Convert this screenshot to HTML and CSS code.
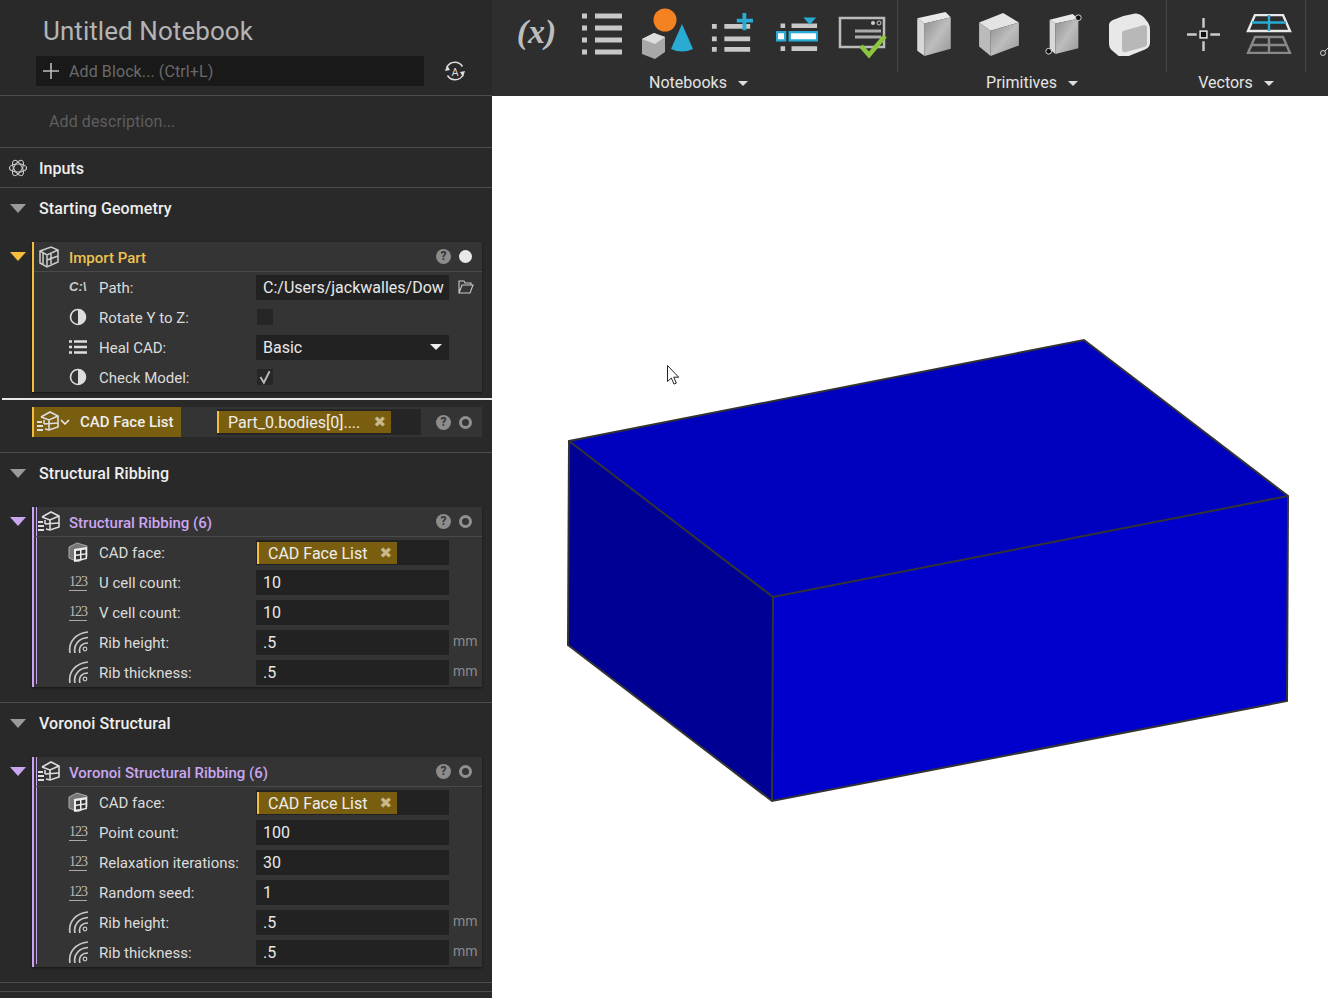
FILE: index.html
```html
<!DOCTYPE html>
<html lang="en">
<head>
    <meta charset="UTF-8">
    <title>Untitled Notebook</title>
    <link rel="stylesheet" href="styles.css">
</head>
<body>
    <svg class="sprites" width="0" height="0">
        <symbol id="i-bool" viewBox="0 0 18 18">
            <circle cx="9" cy="9" r="7.500" fill="none" stroke="#ddd" stroke-width="1.600"/>
            <path d="M9 1.500a7.500 7.500 0 0 1 0 15z" fill="#ddd"/>
        </symbol>
        <symbol id="i-list" viewBox="0 0 18 14">
            <path d="M0 1.500h3M5 1.500h13M0 7h3M5 7h13M0 12.500h3M5 12.500h13" stroke="#ddd" stroke-width="2.500" fill="none"/>
        </symbol>
        <symbol id="i-rib" viewBox="0 0 22 22">
            <g fill="none" stroke="#c8c8c8" stroke-width="1.700">
                <path d="M2 22C0 11 8 2 20 1"/>
                <path d="M7 22C5 14 11 7 20 6.500"/>
                <path d="M12 22c-2-6 2-10 8-10"/>
            </g>
            <circle cx="17" cy="18" r="1.800" fill="none" stroke="#c8c8c8" stroke-width="1.200"/>
        </symbol>
        <symbol id="i-face" viewBox="0 0 20 20">
            <path d="M1 5l8-4 10 3v11l-9 5-9-4z" fill="#777" stroke="#aaa"/>
            <path d="M6 7l13-2v12l-13 3z" fill="#eee"/>
            <path d="M8 9l4-.6v3.600l-4 .5zM13.500 8.200l4-.6v3.600l-4 .6zM8 14l4-.6v3.600l-4 .6zM13.500 13.200l4-.6v3.400l-4 .7z" fill="#333"/>
        </symbol>
        <symbol id="i-ribbing" viewBox="0 0 22 22">
            <g fill="none" stroke="#ddd" stroke-width="1.600">
                <path d="M4 6l9-5 8 4v11l-9 3-4-1"/>
                <path d="M4 6l8 3 9-4M12 9v10M7 13l14-1M7 9v4"/>
            </g>
            <path d="M0 11h5M0 15h6M0 19h6" stroke="#ddd" stroke-width="2.200"/>
        </symbol>
        <symbol id="i-box" viewBox="0 0 22 22">
            <g fill="none" stroke="#ccc" stroke-width="1.500">
                <path d="M2 5l11-4 7 3v12l-11 5-7-4z"/>
                <path d="M2 5l7 4 11-5M9 9v12M5 7v11M13 7v11M9 14l11-4"/>
            </g>
        </symbol>
        <linearGradient id="g-silver" x1="0" x2="1" y1="0" y2="1">
            <stop offset="0" stop-color="#8e8e8e"/>
            <stop offset=".5" stop-color="#bdbdbd"/>
            <stop offset="1" stop-color="#989898"/>
        </linearGradient>
    </svg>

    <div class="app">
        <aside class="sidebar">
            <header class="nb-head">
                <div class="nb-title">Untitled Notebook</div>
                <div class="add-row">
                    <div class="add-block">
                        <svg class="plus" viewBox="0 0 16 16"><path d="M8 0v16M0 8h16" stroke="#bbb" stroke-width="1.600"/></svg>
                        <span>Add Block... (Ctrl+L)</span>
                    </div>
                    <svg class="auto-icon" viewBox="0 0 20 20">
                        <path d="M17.500 5.500A9 9 0 0 0 2 6M2.500 14.500a9 9 0 0 0 15.500-.5" fill="none" stroke="#ddd" stroke-width="1.500"/>
                        <path d="M0 10l2-6 3 5zM20 10l-2 6-3-5z" fill="#ddd"/>
                        <text x="10" y="14.500" text-anchor="middle" class="auto-glyph">A</text>
                    </svg>
                </div>
            </header>

            <div class="description">Add description...</div>

            <div class="inputs-row">
                <svg class="atom" viewBox="0 0 20 20">
                    <g fill="none" stroke="#ccc" stroke-width="1.200">
                        <ellipse cx="10" cy="10" rx="9.500" ry="4.500"/>
                        <ellipse cx="10" cy="10" rx="9.500" ry="4.500" transform="rotate(60 10 10)"/>
                        <ellipse cx="10" cy="10" rx="9.500" ry="4.500" transform="rotate(120 10 10)"/>
                    </g>
                </svg>
                <span>Inputs</span>
            </div>

            <section class="group group-first">
                <div class="group-head"><i class="caret"></i><span>Starting Geometry</span></div>
                <div class="card card-import">
                    <div class="card-head">
                        <i class="caret caret-yellow"></i>
                        <svg class="card-icon"><use href="#i-box"/></svg>
                        <span class="card-title">Import Part</span>
                        <span class="help">?</span>
                        <i class="dot dot-full"></i>
                    </div>
                    <div class="row">
                        <span class="row-icon path-glyph">C:\</span>
                        <label>Path:</label>
                        <div class="field">C:/Users/jackwalles/Dow</div>
                        <svg class="folder" viewBox="0 0 16 14"><path d="M1 13V1h5l1 2h6v2M1 13h11l3-8H4z" fill="none" stroke="#ccc" stroke-width="1.100"/></svg>
                    </div>
                    <div class="row">
                        <svg class="row-icon icon-bool"><use href="#i-bool"/></svg>
                        <label>Rotate Y to Z:</label>
                        <i class="check"></i>
                    </div>
                    <div class="row">
                        <svg class="row-icon icon-list"><use href="#i-list"/></svg>
                        <label>Heal CAD:</label>
                        <div class="field field-select">Basic<i class="select-caret"></i></div>
                    </div>
                    <div class="row">
                        <svg class="row-icon icon-bool"><use href="#i-bool"/></svg>
                        <label>Check Model:</label>
                        <i class="check"><svg viewBox="0 0 14 14"><path d="M3 7l3 5 5-10" fill="none" stroke="#b5b5b5" stroke-width="1.800"/></svg></i>
                    </div>
                </div>
            </section>

            <div class="white-rule"></div>

            <div class="output-row">
                <div class="output-tag">
                    <svg class="tag-icon"><use href="#i-ribbing"/></svg>
                    <svg class="tag-chev" viewBox="0 0 10 6"><path d="M1 1l4 4 4-4" fill="none" stroke="#eee" stroke-width="1.500"/></svg>
                    <span>CAD Face List</span>
                </div>
                <div class="output-field">
                    <div class="chip chip-long">Part_0.bodies[0]....<b class="chip-x">✖</b></div>
                </div>
                <span class="help">?</span>
                <i class="dot"></i>
            </div>

            <section class="group group-rib">
                <div class="group-head"><i class="caret"></i><span>Structural Ribbing</span></div>
                <div class="card card-purple">
                    <div class="card-head">
                        <i class="caret caret-purple"></i>
                        <svg class="card-icon"><use href="#i-ribbing"/></svg>
                        <span class="card-title">Structural Ribbing (6)</span>
                        <span class="help">?</span>
                        <i class="dot"></i>
                    </div>
                    <div class="row">
                        <svg class="row-icon"><use href="#i-face"/></svg>
                        <label>CAD face:</label>
                        <div class="field field-chip"><div class="chip">CAD Face List<b class="chip-x">✖</b></div></div>
                    </div>
                    <div class="row"><span class="row-icon num-icon">123</span><label>U cell count:</label><div class="field">10</div></div>
                    <div class="row"><span class="row-icon num-icon">123</span><label>V cell count:</label><div class="field">10</div></div>
                    <div class="row"><svg class="row-icon icon-rib"><use href="#i-rib"/></svg><label>Rib height:</label><div class="field">.5</div><span class="unit">mm</span></div>
                    <div class="row"><svg class="row-icon icon-rib"><use href="#i-rib"/></svg><label>Rib thickness:</label><div class="field">.5</div><span class="unit">mm</span></div>
                </div>
            </section>

            <section class="group group-rib">
                <div class="group-head"><i class="caret"></i><span>Voronoi Structural</span></div>
                <div class="card card-purple">
                    <div class="card-head">
                        <i class="caret caret-purple"></i>
                        <svg class="card-icon"><use href="#i-ribbing"/></svg>
                        <span class="card-title">Voronoi Structural Ribbing (6)</span>
                        <span class="help">?</span>
                        <i class="dot"></i>
                    </div>
                    <div class="row">
                        <svg class="row-icon"><use href="#i-face"/></svg>
                        <label>CAD face:</label>
                        <div class="field field-chip"><div class="chip">CAD Face List<b class="chip-x">✖</b></div></div>
                    </div>
                    <div class="row"><span class="row-icon num-icon">123</span><label>Point count:</label><div class="field">100</div></div>
                    <div class="row"><span class="row-icon num-icon">123</span><label>Relaxation iterations:</label><div class="field">30</div></div>
                    <div class="row"><span class="row-icon num-icon">123</span><label>Random seed:</label><div class="field">1</div></div>
                    <div class="row"><svg class="row-icon icon-rib"><use href="#i-rib"/></svg><label>Rib height:</label><div class="field">.5</div><span class="unit">mm</span></div>
                    <div class="row"><svg class="row-icon icon-rib"><use href="#i-rib"/></svg><label>Rib thickness:</label><div class="field">.5</div><span class="unit">mm</span></div>
                </div>
            </section>

            <div class="tail-rule"></div>
        </aside>

        <main class="main">
            <div class="toolbar">
                <div class="tool-group group-notebooks">
                    <div class="tools">
                        <div class="tool"><span class="fx">(x)</span></div>
                        <div class="tool">
                            <svg viewBox="0 0 42 42" class="tool-svg"><path d="M1 3h5M14 3h27M1 15h5M14 15h27M1 27h5M14 27h27M1 39h5M14 39h27" stroke="#c8c8c8" stroke-width="5" fill="none"/></svg>
                        </div>
                        <div class="tool">
                            <svg viewBox="0 0 52 52" class="tool-svg tool-shapes">
                                <circle cx="24" cy="12" r="11.500" fill="#f58220"/>
                                <path d="M41 16L30 41q11 5 22 0z" fill="#29abd4"/>
                                <path d="M1 31l12-6 11 4v15l-10 7-13-5z" fill="#a8a8a8"/>
                                <path d="M1 31l13 5 10-7-11-4z" fill="#ddd"/>
                            </svg>
                        </div>
                        <div class="tool">
                            <svg viewBox="0 0 44 44" class="tool-svg">
                                <path d="M1 14h5M14 14h27M1 27h5M14 27h27M1 38h5M14 38h27" stroke="#c8c8c8" stroke-width="5" fill="none"/>
                                <path d="M35 0v18M27 8h17" stroke="#29abd4" stroke-width="4" fill="none"/>
                            </svg>
                        </div>
                        <div class="tool">
                            <svg viewBox="0 0 46 44" class="tool-svg">
                                <path d="M5 13h5M17 13h28M5 38h5M17 38h28" stroke="#c8c8c8" stroke-width="5" fill="none"/>
                                <path d="M30 4h14l-7 8z" fill="#29abd4"/>
                                <rect x="1" y="20" width="9" height="9" fill="#fff" stroke="#29abd4" stroke-width="2.500"/>
                                <rect x="15" y="20" width="30" height="9" fill="#fff" stroke="#29abd4" stroke-width="2.500"/>
                            </svg>
                        </div>
                        <div class="tool">
                            <svg viewBox="0 0 50 50" class="tool-svg tool-lg">
                                <rect x="3" y="9" width="44" height="29" fill="none" stroke="#bbb" stroke-width="2.500"/>
                                <circle cx="36" cy="14" r="2" fill="#ccc"/><circle cx="42" cy="14" r="2" fill="none" stroke="#ccc"/>
                                <path d="M18 22h26M18 28h26" stroke="#aaa" stroke-width="3"/>
                                <path d="M24 37l8 9 16-19" fill="none" stroke="#8cc63f" stroke-width="4.500"/>
                            </svg>
                        </div>
                    </div>
                    <div class="tool-label">Notebooks<i class="label-caret"></i></div>
                </div>
                <div class="tool-group group-primitives">
                    <div class="tools">
                        <div class="tool">
                            <svg viewBox="0 0 34 42" class="tool-svg tool-prim">
                                <path d="M1 6l7 5v31l-7-5z" fill="#d8d8d8"/><path d="M1 6l27-6 5 5-25 6z" fill="#e8e8e8"/>
                                <path d="M8 11l25-6v30l-25 7z" fill="url(#g-silver)"/>
                            </svg>
                        </div>
                        <div class="tool">
                            <svg viewBox="0 0 40 42" class="tool-svg tool-prim">
                                <path d="M1 10l11 8v24L1 33z" fill="#bbb"/><path d="M1 10L24 1l15 9-27 8z" fill="#e4e4e4"/>
                                <path d="M12 18l27-8v22l-27 10z" fill="url(#g-silver)"/>
                            </svg>
                        </div>
                        <div class="tool">
                            <svg viewBox="0 0 40 46" class="tool-svg tool-prim">
                                <path d="M5 8l6 4v32l-6-5z" fill="#d8d8d8"/><path d="M5 8l24-6 6 5-24 5z" fill="#e8e8e8"/>
                                <path d="M11 12l24-5v31l-24 6z" fill="url(#g-silver)"/>
                                <circle cx="35" cy="6" r="3" fill="#111" stroke="#ddd"/><circle cx="4" cy="41" r="3" fill="#111" stroke="#ddd"/>
                            </svg>
                        </div>
                        <div class="tool">
                            <svg viewBox="0 0 42 42" class="tool-svg tool-prim">
                                <path d="M5 7Q16 2 27 0.500q5 0 9 4l4 5q2 3 2 7v13q0 5-5 7l-20 8q-4 1-7-2l-7-6q-2-2-2-6V12q0-3 4-5z" fill="#e8e8e8"/>
                                <path d="M15 18l21-6q3 0 3 3v15q0 3-3 4l-18 5q-4 1-4-3V21q0-2 1-3z" fill="#b8b8b8"/>
                            </svg>
                        </div>
                    </div>
                    <div class="tool-label">Primitives<i class="label-caret"></i></div>
                </div>
                <div class="tool-group group-vectors">
                    <div class="tools">
                        <div class="tool">
                            <svg viewBox="0 0 34 34" class="tool-svg tool-point">
                                <path d="M17 0v10M17 24v10M0 17h10M24 17h10" stroke="#ccc" stroke-width="2.500"/>
                                <rect x="13.500" y="13.500" width="7" height="7" fill="#111" stroke="#eee" stroke-width="1.500"/>
                            </svg>
                        </div>
                        <div class="tool">
                            <svg viewBox="0 0 46 40" class="tool-svg tool-plane">
                                <path d="M2 17L9 1h28l7 16z" fill="none" stroke="#e8e8e8" stroke-width="2.400"/>
                                <path d="M6 8.500h34M23 1v16" stroke="#29abd4" stroke-width="2.400"/>
                                <path d="M2 39l7-16h28l7 16zM6 31h34M23 23v16" fill="none" stroke="#888" stroke-width="2.400"/>
                            </svg>
                        </div>
                    </div>
                    <div class="tool-label">Vectors<i class="label-caret"></i></div>
                </div>
                <div class="tool-group group-clipped">
                    <svg viewBox="0 0 10 10" class="clip-icon"><circle cx="4" cy="7" r="2.500" fill="none" stroke="#ccc"/><path d="M6 5l4-4" stroke="#ccc"/></svg>
                </div>
            </div>

            <div class="viewport">
                <svg class="scene" viewBox="492 96 836 902">
                    <polygon points="569,441 1084,340 1288,496 773,597" fill="#0000bf"/>
                    <polygon points="773,597 1288,496 1287,701 772,801" fill="#0000cc"/>
                    <polygon points="569,441 773,597 772,801 568,645" fill="#000094"/>
                    <path d="M569 441L1084 340 1288 496 1287 701 772 801 568 645ZM569 441L773 597 1288 496M773 597L772 801" fill="none" stroke="#333" stroke-width="2"/>
                    <path d="M667.500 365.500v16l3.800-3.400 2.700 6 2.300-1-2.600-5.900 5 0z" fill="#fff" stroke="#222"/>
                </svg>
            </div>
        </main>
    </div>
</body>
</html>
```

FILE: styles.css
```css
* {
    margin: 0;
    padding: 0;
    box-sizing: border-box;
}

body {
    width: 1328px;
    height: 998px;
    overflow: hidden;
    font-family: Roboto, sans-serif;
    background: white;
}

.sprites {
    position: absolute;
}

.auto-glyph {
    font: 11px Roboto, sans-serif;
    fill: #ddd;
}

.app {
    display: flex;
    height: 998px;
}

/* sidebar */
.sidebar {
    width: 492px;
    flex: none;
    height: 998px;
    overflow: hidden;
    background: #292929;
    color: #e4e4e4;
    font-size: 15px;
}

.nb-head {
    height: 96px;
    border-bottom: 1px solid #4c4c4c;
    padding: 15px 0 0 36px;
}

.nb-title {
    height: 32px;
    margin-left: 7px;
    font-size: 26px;
    line-height: 32px;
    letter-spacing: 0.06px;
    color: #b4b4b4;
}

.add-row {
    display: flex;
    align-items: center;
    margin-top: 9px;
}

.add-block {
    width: 388px;
    height: 30px;
    background: #191919;
    display: flex;
    align-items: center;
    padding-left: 7px;
    font-size: 16px;
    letter-spacing: 0.1px;
    color: #6a6a6a;
}

.plus {
    width: 16px;
    height: 16px;
    margin-right: 10px;
}

.auto-icon {
    width: 20px;
    height: 20px;
    margin-left: 21px;
}

.description {
    height: 52px;
    border-bottom: 1px solid #4c4c4c;
    padding-left: 49px;
    line-height: 52px;
    font-size: 16px;
    letter-spacing: 0.1px;
    color: #5e5e5e;
}

.inputs-row {
    height: 40px;
    border-bottom: 1px solid #4c4c4c;
    display: flex;
    align-items: center;
    padding: 1px 0 0 9px;
    font-weight: 500;
    font-size: 16px;
    color: #eee;
}

.atom {
    width: 18px;
    height: 18px;
    margin-right: 12px;
}

.group-head {
    height: 40px;
    display: flex;
    align-items: center;
    padding-left: 10px;
    font-weight: 500;
    font-size: 16px;
    letter-spacing: 0.1px;
    color: #eee;
}

.group-head span {
    margin-left: 13px;
}

.caret {
    width: 0;
    height: 0;
    border-left: 8px solid transparent;
    border-right: 8px solid transparent;
    border-top: 9px solid #9a9a9a;
}

.caret-yellow {
    border-top-color: #f5bd3c;
}

.caret-purple {
    border-top-color: #cba6f0;
}

.group-first {
    height: 210px;
}

.group-rib {
    height: 251px;
    border-bottom: 1px solid #4c4c4c;
}

.group-rib + .group-rib {
    height: 280px;
}

.card {
    margin: 14px 10px 0 32px;
    background: #343434;
    box-shadow: 0 1px 2px rgba(0, 0, 0, 0.5);
    border-left: 2px solid #f5bd3c;
}

.card-purple {
    border-left-color: #cba6f0;
    position: relative;
}

/* second purple rule of a multi-output block */
.card-purple::before {
    content: "";
    position: absolute;
    left: 2px;
    top: 0;
    bottom: 3px;
    width: 1px;
    background: #cba6f0;
}

.card-head {
    height: 30px;
    display: flex;
    align-items: center;
    border-bottom: 1px solid #4a4a4a;
    position: relative;
    padding-left: 4px;
}

.card-head .caret {
    position: absolute;
    left: -24px;
    top: 10px;
}

.card-icon {
    width: 22px;
    height: 22px;
    flex: none;
    margin-right: 9px;
}

.card-title {
    flex: 1;
    padding-top: 2px;
    font-weight: 500;
    font-size: 15px;
    color: #eec24f;
}

.card-purple .card-title {
    color: #cba6f0;
}

.help {
    width: 15px;
    height: 15px;
    flex: none;
    border-radius: 50%;
    background: #8c8c8c;
    font-size: 12px;
    font-weight: 700;
    line-height: 15px;
    text-align: center;
    color: #333;
}

.dot {
    width: 13px;
    height: 13px;
    border-radius: 50%;
    border: 3px solid #909090;
    flex: none;
    margin: 0 10px 0 8px;
}

.dot-full {
    background: #e8e8e8;
    border-color: #e8e8e8;
}

.row {
    height: 30px;
    display: flex;
    align-items: center;
    padding-left: 34px;
}

.row-icon {
    width: 20px;
    height: 20px;
    flex: none;
    margin-right: 11px;
}

.icon-bool {
    width: 18px;
    height: 18px;
    margin-left: 1px;
    margin-right: 12px;
}

.icon-list {
    width: 18px;
    height: 14px;
    margin-left: 1px;
    margin-right: 12px;
}

.icon-rib {
    width: 22px;
    height: 22px;
    margin-right: 9px;
}

.path-glyph {
    padding-left: 1px;
    font: italic bold 13px "Liberation Sans", sans-serif;
    color: #ccc;
    line-height: 20px;
}

.num-icon {
    width: 18px;
    height: 17px;
    margin-left: 1px;
    margin-right: 12px;
    font: 14px/15px "Liberation Serif", serif;
    letter-spacing: -1px;
    color: #bbb;
    border-bottom: 1px solid #aaa;
}

.row label {
    width: 157px;
    flex: none;
    padding-top: 1px;
    font-size: 15px;
    color: #dcdcdc;
    white-space: nowrap;
}

.field {
    width: 193px;
    height: 25px;
    flex: none;
    background: #222;
    padding-left: 7px;
    font-size: 16px;
    line-height: 25px;
    color: #e8e8e8;
    white-space: nowrap;
}

.field-select {
    display: flex;
    align-items: center;
    justify-content: space-between;
    padding-right: 7px;
}

.select-caret {
    border-left: 6px solid transparent;
    border-right: 6px solid transparent;
    border-top: 6px solid #eee;
}

.field-chip {
    padding: 1px 0 0 1px;
}

.chip {
    display: inline-flex;
    align-items: center;
    height: 22px;
    padding: 0 5px 0 9px;
    background: #7a5e10;
    border-left: 2px solid #f5bd3c;
    font-size: 16px;
    line-height: 21px;
    color: #eee;
}

.chip-x {
    margin-left: 12px;
    font-size: 15px;
    font-weight: normal;
    color: #c9b98a;
    font-family: "DejaVu Sans", sans-serif;
}

.folder {
    width: 16px;
    height: 14px;
    margin-left: 9px;
}

.unit {
    margin: -2px 0 0 4px;
    font-size: 14px;
    color: #8a8a8a;
}

.check {
    width: 16px;
    height: 16px;
    margin-left: 1px;
    background: #262626;
    display: block;
}

.check svg {
    display: block;
}

.white-rule {
    height: 2px;
    margin-left: 2px;
    background: #e8e8e8;
}

.output-row {
    height: 52px;
    margin-left: 32px;
    margin-right: 10px;
    padding-top: 7px;
    display: flex;
    align-items: flex-start;
    background: linear-gradient(#292929 7px, #343434 7px, #343434 37px, #292929 37px);
}

.output-row .help {
    margin-top: 8px;
    margin-left: 15px;
}

.output-row .dot {
    margin-top: 9px;
}

.output-tag {
    width: 149px;
    height: 30px;
    background: #7a5e10;
    border-left: 2px solid #f5bd3c;
    display: flex;
    align-items: center;
    padding-left: 3px;
    font-size: 15px;
    font-weight: 500;
    color: #eee;
}

.tag-icon {
    width: 22px;
    height: 22px;
    flex: none;
}

.tag-chev {
    width: 10px;
    height: 6px;
    margin: 0 10px 0 1px;
}

.output-field {
    width: 204px;
    height: 26px;
    margin: 2px 0 0 36px;
    background: #252525;
    padding-top: 2px;
}

.chip-long {
    width: 174px;
    justify-content: space-between;
    line-height: 23px;
}

.output-row + .group-rib {
    border-top: 1px solid #4c4c4c;
}

.tail-rule {
    height: 10px;
    margin-top: 8px;
    border-top: 1px solid #4c4c4c;
}

/* right side */
.main {
    flex: 1;
    min-width: 0;
    display: flex;
    flex-direction: column;
}

.toolbar {
    height: 96px;
    background: #2e2e2e;
    display: flex;
    overflow: hidden;
}

.tool-group {
    display: flex;
    flex-direction: column;
    flex: none;
    border-right: 1px solid #464646;
    height: 72px;
}

.group-notebooks {
    width: 406px;
    padding-left: 12px;
}

.group-primitives {
    width: 269px;
    padding-left: 3px;
}

.group-vectors {
    width: 139px;
    padding-left: 4px;
}

.group-notebooks .tool-label,
.group-vectors .tool-label {
    padding-right: 4px;
}

.group-primitives .tool-label {
    padding-right: 3px;
}

.group-clipped {
    flex: 1;
    border-right: none;
}

.clip-icon {
    width: 10px;
    height: 10px;
    margin: 46px 0 0 13px;
}

.tools {
    display: flex;
    height: 70px;
    flex: none;
    padding-top: 8px;
}

.tool {
    width: 65px;
    height: 52px;
    display: flex;
    align-items: center;
    justify-content: center;
    flex: none;
}

.tool-svg {
    width: 42px;
    height: 42px;
}

.tool-lg {
    width: 50px;
    height: 50px;
}

.tool-shapes {
    width: 52px;
    height: 52px;
}

.tool-prim {
    height: 44px;
}

.tool-point {
    width: 33px;
    height: 33px;
}

.tool-plane {
    width: 46px;
    height: 40px;
}

.fx {
    margin-top: -5px;
    font: italic bold 34px "Liberation Serif", serif;
    color: #bdbdbd;
}

.tool-label {
    height: 26px;
    font-size: 16px;
    line-height: 26px;
    color: #e4e4e4;
    text-align: center;
    white-space: nowrap;
}

.label-caret {
    display: inline-block;
    margin-left: 11px;
    vertical-align: middle;
    border-left: 5px solid transparent;
    border-right: 5px solid transparent;
    border-top: 5px solid #ddd;
}

.viewport {
    flex: 1;
    background: white;
}

.scene {
    display: block;
    width: 836px;
    height: 902px;
}
```
